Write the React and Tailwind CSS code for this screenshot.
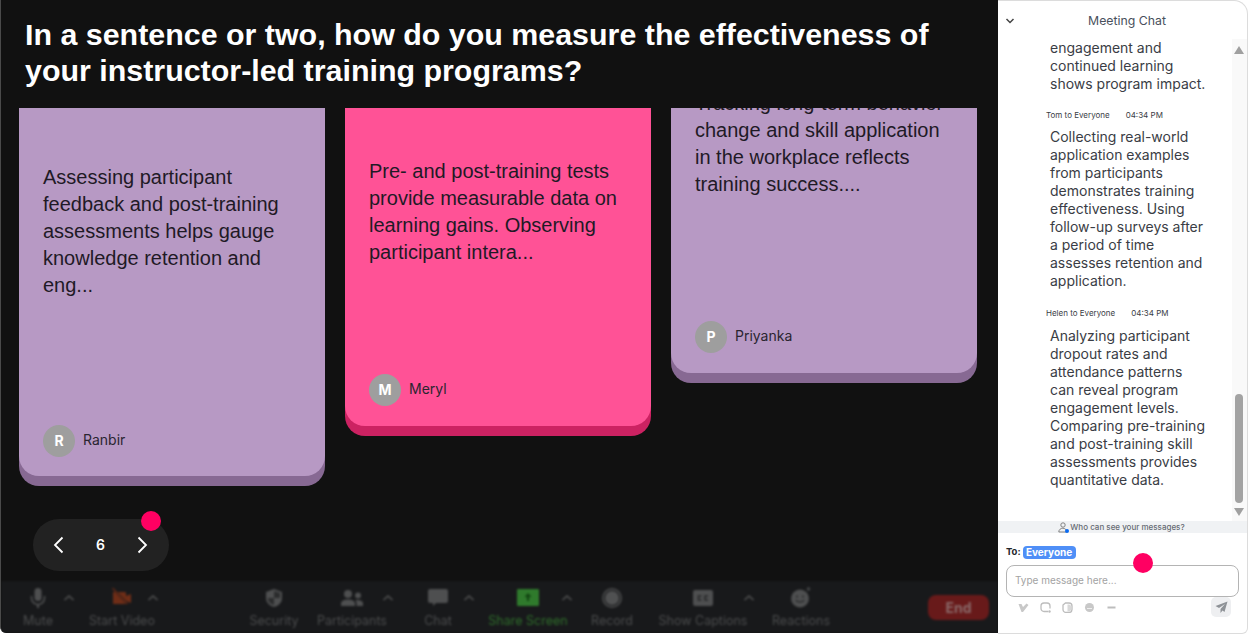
import React from "react";

function Card({ color, shadow, height, top, text, name, pb }) {
  return (
    <div className={`w-[306px] shrink-0 rounded-b-[20px] px-6 flex flex-col justify-between ${color} ${shadow} ${height} ${top} ${pb}`}>
      <p className="font-['Liberation_Sans',Arial,sans-serif] text-[20px] leading-[27px] text-[#1f1a26] whitespace-pre-line">{text}</p>
      <div className="flex items-center gap-2">
        <div className="w-8 h-8 rounded-full bg-[#9e9e9e] text-white font-bold text-sm flex items-center justify-center">{name[0]}</div>
        <span className="text-sm text-[#2a2530] -mt-[2px]">{name}</span>
      </div>
    </div>
  );
}

function Caret({ cls }) {
  return (
    <div className={`w-0 mt-[9px] ${cls}`}>
      <svg width="12" height="8" viewBox="0 0 12 8" className="max-w-none">
        <path d="M1.500 6L6 2l4.500 4" fill="none" stroke="#505152" strokeWidth="1.600" />
      </svg>
    </div>
  );
}

function Tool({ w, label, color = "text-[#4b4c4d]", children }) {
  return (
    <div className={`flex flex-col items-center shrink-0 ${w}`}>
      <div className="h-[25px] flex items-center justify-center">{children}</div>
      <span className={`mt-[3px] text-[12.500px] leading-[15px] whitespace-nowrap ${color}`}>{label}</span>
    </div>
  );
}

const MicIcon = () => (
  <svg width="16" height="22" viewBox="0 0 16 22" fill="#4e4f50">
    <rect x="4.500" y="1" width="7" height="13" rx="3.500" />
    <path d="M1.500 9v2a6.500 6.500 0 0013 0V9" fill="none" stroke="#4e4f50" strokeWidth="1.600" />
    <rect x="7" y="17" width="2" height="4" />
  </svg>
);
const VideoIcon = () => (
  <svg width="20" height="19" viewBox="0 0 20 19">
    <path d="M1 4h12a1 1 0 011 1v3l5-2v9l-5-2v2a1 1 0 01-1 1H1z" fill="#6e2d17" />
    <path d="M1.500 1l15 16" stroke="#18191b" strokeWidth="2.200" />
    <path d="M0.500 0l15 16" stroke="#6e2d17" strokeWidth="1.200" />
  </svg>
);
const ShieldIcon = () => (
  <svg width="20" height="20" viewBox="0 0 20 20">
    <path d="M10 1l8 3v6c0 5-4 8-8 9-4-1-8-4-8-9V4z" fill="#4e4f50" />
    <path d="M10 3v7H4c0 4 3 6 6 7v-7h6V5z" fill="#2b2c2d" />
  </svg>
);
const PeopleIcon = () => (
  <svg width="22" height="18" viewBox="0 0 22 18" fill="#4e4f50">
    <circle cx="7" cy="5" r="4" />
    <circle cx="17" cy="6.500" r="3" />
    <path d="M0 17v-2.500C0 12 3 10.500 7 10.500s7 1.500 7 4V17z" />
    <path d="M15.500 17v-3c0-1-.5-2-1.300-2.700 3-.7 7.800.3 7.800 3V17z" />
  </svg>
);
const ChatIcon = () => (
  <svg width="22" height="20" viewBox="0 0 22 20" fill="#4e4f50">
    <path d="M3 1h16a2 2 0 012 2v10a2 2 0 01-2 2H9l-3 3v-3H3a2 2 0 01-2-2V3a2 2 0 012-2z" />
  </svg>
);
const ShareIcon = () => (
  <svg width="22" height="17" viewBox="0 0 22 17">
    <rect width="22" height="17" rx="1" fill="#2f7a2c" />
    <path d="M11 4l-3.500 4H10v4h2V8h2.500z" fill="#114411" />
  </svg>
);
const RecordIcon = () => (
  <svg width="20" height="20" viewBox="0 0 20 20">
    <circle cx="10" cy="10" r="9" fill="none" stroke="#454647" strokeWidth="2" />
    <circle cx="10" cy="10" r="7" fill="#505152" />
  </svg>
);
const CcIcon = () => (
  <svg width="20" height="16" viewBox="0 0 20 16">
    <rect width="20" height="16" rx="2" fill="#4e4f50" />
    <path d="M8.500 6H5.500v4h3M15 6h-3v4h3" fill="none" stroke="#262728" strokeWidth="1.500" />
  </svg>
);
const SmileIcon = () => (
  <svg width="20" height="21" viewBox="0 0 20 21">
    <circle cx="9" cy="11.500" r="9" fill="#4e4f50" />
    <circle cx="6" cy="9.500" r="1" fill="#262728" />
    <circle cx="12" cy="9.500" r="1" fill="#262728" />
    <path d="M5 13c1 2.500 7 2.500 8 0" fill="none" stroke="#262728" strokeWidth="1.200" />
    <path d="M17.500 0v4M15.500 2h4" stroke="#4e4f50" strokeWidth="1.200" />
  </svg>
);

function ChatLines({ lines }) {
  return (
    <p className="pl-[52px] text-[14px] leading-[18px] text-[#3a3d45] whitespace-nowrap">
      {lines.map((l) => (
        <span key={l} className="block">{l}</span>
      ))}
    </p>
  );
}

function Meta({ name, time, cls }) {
  return (
    <div className={`pl-[48px] flex gap-[16px] text-[8px] leading-[12px] text-[#3a3d45] ${cls}`}>
      <span>{name}</span>
      <span>{time}</span>
    </div>
  );
}

export default function App() {
  return (
    <div className="w-[1248px] h-[634px] bg-white flex overflow-hidden font-['Inter',sans-serif]">
      {/* Main stage */}
      <div className="w-[998px] h-[633px] shrink-0 bg-[#111111] border-l border-[#4a4a4a] flex flex-col rounded-bl-[6px] overflow-hidden">
        <h1 className="h-[108px] shrink-0 pl-6 pt-[16px] text-[30.400px] leading-[36px] font-bold text-white font-['Liberation_Sans',Arial,sans-serif] whitespace-nowrap">
          In a sentence or two, how do you measure the effectiveness of
          <br />
          your instructor-led training programs?
        </h1>

        <div className="h-[411px] shrink-0 overflow-hidden flex items-start gap-5 pl-[18px]">
          <Card color="bg-[#b799c4]" shadow="shadow-[0_10px_0_#876993]" height="h-[368px]" top="pt-[56px]" pb="pb-[19px]"
            text={"Assessing participant\nfeedback and post-training\nassessments helps gauge\nknowledge retention and\neng..."} name="Ranbir" />
          <Card color="bg-[#ff5296]" shadow="shadow-[0_10px_0_#cc2262]" height="h-[318px]" top="pt-[50px]" pb="pb-[20px]"
            text={"Pre- and post-training tests\nprovide measurable data on\nlearning gains. Observing\nparticipant intera..."} name="Meryl" />
          <div className="w-[306px] h-[265px] shrink-0 rounded-b-[20px] bg-[#b799c4] shadow-[0_10px_0_#876993] px-6 pb-[20px] flex flex-col justify-between">
            <p className="-mt-[18px] font-['Liberation_Sans',Arial,sans-serif] text-[20px] leading-[27px] text-[#1f1a26] whitespace-pre-line">
              {"Tracking long-term behavior\nchange and skill application\nin the workplace reflects\ntraining success...."}
            </p>
            <div className="flex items-center gap-2">
              <div className="w-8 h-8 rounded-full bg-[#9e9e9e] text-white font-bold text-sm flex items-center justify-center">P</div>
              <span className="text-sm text-[#2a2530] -mt-[2px]">Priyanka</span>
            </div>
          </div>
        </div>

        <div className="relative ml-8 w-[136px] h-[52px] shrink-0 rounded-full bg-[#222222] flex items-center justify-between pl-[19px] pr-[20px] text-white">
          <svg width="14" height="18" viewBox="0 0 14 18"><path d="M10.500 1.500L3 9l7.500 7.500" fill="none" stroke="white" strokeWidth="1.800" /></svg>
          <span className="text-sm font-semibold">6</span>
          <svg width="14" height="18" viewBox="0 0 14 18"><path d="M3.500 1.500L11 9l-7.500 7.500" fill="none" stroke="white" strokeWidth="1.800" /></svg>
          <div className="absolute w-5 h-5 rounded-full bg-[#ff0062] right-2 -top-[8px]"></div>
        </div>

        <div className="mt-[10px] flex-1 bg-[#18191b] flex items-start pt-[4px] blur-[1px]">
          <Tool w="w-[74px]" label="Mute"><MicIcon /></Tool>
          <Caret cls="-ml-[12px] mr-[12px]" />
          <Tool w="w-[94px]" label="Start Video"><VideoIcon /></Tool>
          <Caret cls="-ml-[22px] mr-[22px]" />
          <Tool w="w-[70px] ml-[70px]" label="Security"><ShieldIcon /></Tool>
          <Tool w="w-[86px]" label="Participants"><PeopleIcon /></Tool>
          <Caret cls="-ml-[13px] mr-[13px]" />
          <Tool w="w-[60px] ml-[13px]" label="Chat"><ChatIcon /></Tool>
          <Caret cls="-ml-[5px] mr-[5px]" />
          <Tool w="w-[90px] ml-[15px]" label="Share Screen" color="text-[#2f6e2b]"><ShareIcon /></Tool>
          <Caret cls="-ml-[12px] mr-[12px]" />
          <Tool w="w-[60px] ml-[9px]" label="Record"><RecordIcon /></Tool>
          <Tool w="w-[96px] ml-[13px]" label="Show Captions"><CcIcon /></Tool>
          <Caret cls="-ml-[8px] mr-[8px]" />
          <Tool w="w-[70px] ml-[15px]" label="Reactions"><SmileIcon /></Tool>
          <div className="ml-[92px] mt-[10px] w-[61px] h-[25px] rounded-lg bg-[#681a1a] text-[#8a6a6a] text-sm font-bold flex items-center justify-center shrink-0">End</div>
        </div>
      </div>

      {/* Chat */}
      <div className="w-[250px] h-[634px] shrink-0 bg-white border-t border-r border-b border-[#dcdcdc] rounded-tr-[14px] rounded-br-[6px] flex flex-col relative overflow-hidden">
        <div className="h-[38px] shrink-0 relative flex items-center justify-center text-[12.300px] text-[#49505c] pt-[3px] pl-[9px]">
          <svg width="10" height="8" viewBox="0 0 10 8" className="absolute left-[7px] top-[16px]"><path d="M1.500 2L5 5.500 8.500 2" fill="none" stroke="#444" strokeWidth="1.500" /></svg>
          Meeting Chat
        </div>

        <div className="h-[482px] shrink-0 flex overflow-hidden">
          <div className="flex-1 overflow-hidden">
            <ChatLines lines={["engagement and", "continued learning", "shows program impact."]} />
            <Meta name="Tom to Everyone" time="04:34 PM" cls="mt-[16px] mb-[7px]" />
            <ChatLines lines={["Collecting real-world", "application examples", "from participants", "demonstrates training", "effectiveness. Using", "follow-up surveys after", "a period of time", "assesses retention and", "application."]} />
            <Meta name="Helen to Everyone" time="04:34 PM" cls="mt-[17px] mb-[8px]" />
            <ChatLines lines={["Analyzing participant", "dropout rates and", "attendance patterns", "can reveal program", "engagement levels.", "Comparing pre-training", "and post-training skill", "assessments provides", "quantitative data."]} />
          </div>
          <div className="w-[15px] shrink-0 bg-[#f9f9f9] flex flex-col items-center pr-[1px]">
            <svg width="10" height="8" viewBox="0 0 10 8" className="mt-[7px]"><path d="M5 0l5 8H0z" fill="#a0a0a0" /></svg>
            <div className="h-[340px] shrink-0"></div>
            <div className="w-[8px] h-[109px] rounded-full bg-[#a3a3a3]"></div>
            <svg width="10" height="8" viewBox="0 0 10 8" className="mt-[5px]"><path d="M0 0h10L5 8z" fill="#a0a0a0" /></svg>
          </div>
        </div>

        <div className="h-[12px] shrink-0 bg-[#f0f2f4] flex items-center justify-center text-[8px] font-medium text-[#666b73] pr-[2px]">
          <svg width="12" height="11" viewBox="0 0 12 11">
            <circle cx="5" cy="3" r="2.200" fill="none" stroke="#777" strokeWidth="0.900" />
            <path d="M0.800 10c0-5 8-5 8 0z" fill="none" stroke="#777" strokeWidth="0.900" />
            <circle cx="9" cy="9" r="2" fill="#0b6bf0" />
          </svg>
          Who can see your messages?
        </div>

        <div className="flex-1 px-2 relative">
          <div className="flex items-center gap-[2px] mt-[13px] h-[13px]">
            <span className="text-[9.500px] font-bold text-[#23262b]">To:</span>
            <span className="h-[13px] w-[53px] rounded-[4px] bg-[#4f8ff7] text-white font-bold text-[10px] flex items-center justify-center">Everyone</span>
          </div>
          <div className="mt-[6px] w-[233px] h-[32px] border border-[#b4b4b4] rounded-lg text-[10px] text-[#a3a3a3] flex items-center pl-[8px] pb-[1px]">
            Type message here...
          </div>
          <div className="flex items-center pl-[12px] h-[20px]">
            <div className="flex items-center gap-[11px] mt-[1px]">
              <svg width="11" height="11" viewBox="0 0 11 11"><path d="M0.500 2h3l1.500 3L8.500 1.500 10.500 3 5 10H3.500z" fill="#c8c8c8" /></svg>
              <svg width="11" height="11" viewBox="0 0 11 11"><path d="M8 9.500H4A3 3 0 011 6.500V4a3 3 0 013-3h3a3 3 0 013 3v2.500" fill="none" stroke="#bdbdbd" strokeWidth="1.300" /><circle cx="9.500" cy="9.500" r="1.200" fill="#bdbdbd" /></svg>
              <svg width="11" height="11" viewBox="0 0 11 11"><path d="M1 3l2.500-2H7a3 3 0 013 3v3.500A3 3 0 017 10.500H4a3 3 0 01-3-3z" fill="none" stroke="#bdbdbd" strokeWidth="1.300" /><path d="M5.500 2.500h1.500a2 2 0 012 2v3a2 2 0 01-2 2H5.500z" fill="#d8d8d8" /></svg>
              <svg width="11" height="11" viewBox="0 0 11 11"><circle cx="5.500" cy="5.500" r="4.500" fill="#c8c8c8" /><path d="M3 6.500h5" stroke="#eee" strokeWidth="1" /></svg>
              <svg width="11" height="11" viewBox="0 0 11 11"><rect x="1.500" y="4.500" width="8" height="2" fill="#bdbdbd" /></svg>
            </div>
            <div className="ml-auto mr-[8px] w-[20px] h-[20px] rounded-[5px] bg-[#eeeff1] flex items-center justify-center">
              <svg width="13" height="13" viewBox="0 0 13 13"><path d="M12.500 0.500L0.500 5l3.500 2 6-4-4.500 5v4l2-2.500 2 1.500z" fill="#8e9297" /></svg>
            </div>
          </div>
          <div className="absolute w-5 h-5 rounded-full bg-[#ff0062] left-[135px] top-[20px]"></div>
        </div>
      </div>
    </div>
  );
}
